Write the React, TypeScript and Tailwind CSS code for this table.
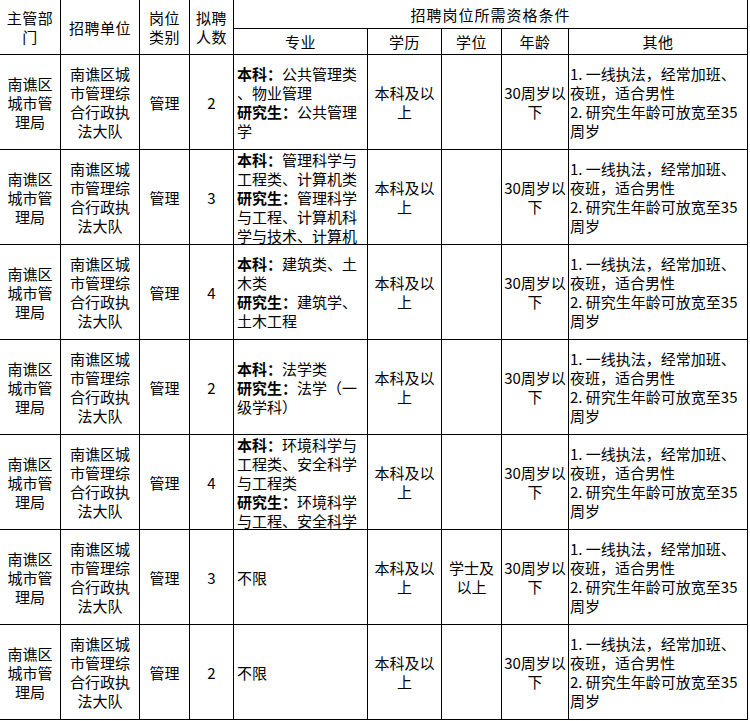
import React from "react";

type Seg = { b?: boolean; t: string };
type Line = string | Seg[];

function Lines({ lines, align = "center" }: { lines: Line[]; align?: "center" | "left" }) {
  return (
    <div className={align === "center" ? "text-center" : "text-left"}>
      {lines.map((l, i) => (
        <div key={i} className="whitespace-nowrap">
          {typeof l === "string"
            ? l
            : l.map((s, j) => (
                <span key={j} className={s.b ? "font-bold" : ""}>
                  {s.t}
                </span>
              ))}
        </div>
      ))}
    </div>
  );
}

const BK = "本科：";
const YJS = "研究生：";

type Row = {
  n: string;
  major: Line[];
  degree: Line[];
};

const other: Line[] = ["1. 一线执法，经常加班、", "夜班，适合男性", "2. 研究生年龄可放宽至35", "周岁"];

const rows: Row[] = [
  {
    n: "2",
    major: [
      [{ b: true, t: BK }, { t: "公共管理类" }],
      "、物业管理",
      [{ b: true, t: YJS }, { t: "公共管理" }],
      "学",
    ],
    degree: [],
  },
  {
    n: "3",
    major: [
      [{ b: true, t: BK }, { t: "管理科学与" }],
      "工程类、计算机类",
      [{ b: true, t: YJS }, { t: "管理科学" }],
      "与工程、计算机科",
      "学与技术、计算机",
    ],
    degree: [],
  },
  {
    n: "4",
    major: [
      [{ b: true, t: BK }, { t: "建筑类、土" }],
      "木类",
      [{ b: true, t: YJS }, { t: "建筑学、" }],
      "土木工程",
    ],
    degree: [],
  },
  {
    n: "2",
    major: [
      [{ b: true, t: BK }, { t: "法学类" }],
      [{ b: true, t: YJS }, { t: "法学（一" }],
      "级学科）",
    ],
    degree: [],
  },
  {
    n: "4",
    major: [
      [{ b: true, t: BK }, { t: "环境科学与" }],
      "工程类、安全科学",
      "与工程类",
      [{ b: true, t: YJS }, { t: "环境科学" }],
      "与工程、安全科学",
    ],
    degree: [],
  },
  { n: "3", major: ["不限"], degree: ["学士及", "以上"] },
  { n: "2", major: ["不限"], degree: [] },
];

const cell = "border-r border-b border-black flex items-center overflow-hidden";
const cc = `${cell} justify-center`;
const cl = `${cell} justify-start`;

export default function App() {
  return (
    <div
      className="bg-white w-[750px] h-[721px] text-black text-[15px] leading-[19px]"
      style={{ fontFamily: '"Noto Sans CJK SC", "Noto Sans", sans-serif' }}
    >
      <div className="grid grid-cols-[61px_79px_50px_44px_134px_74px_60px_67px_179px] grid-rows-[29px_26px_repeat(7,95px)] w-[748px]">
        <div className={`${cc} row-span-2 tracking-[0.5px]`}>
          <Lines lines={["主管部", "门"]} />
        </div>
        <div className={`${cc} row-span-2 tracking-[0.5px]`}>
          <Lines lines={["招聘单位"]} />
        </div>
        <div className={`${cc} row-span-2 tracking-[0.5px]`}>
          <Lines lines={["岗位", "类别"]} />
        </div>
        <div className={`${cc} row-span-2 tracking-[0.5px]`}>
          <Lines lines={["拟聘", "人数"]} />
        </div>
        <div className={`${cc} col-span-5 tracking-[1px]`}>
          <Lines lines={["招聘岗位所需资格条件"]} />
        </div>
        <div className={`${cc} tracking-[0.5px]`}>
          <Lines lines={["专业"]} />
        </div>
        <div className={`${cc} tracking-[0.5px]`}>
          <Lines lines={["学历"]} />
        </div>
        <div className={`${cc} tracking-[0.5px]`}>
          <Lines lines={["学位"]} />
        </div>
        <div className={`${cc} tracking-[0.5px]`}>
          <Lines lines={["年龄"]} />
        </div>
        <div className={`${cc} tracking-[0.5px]`}>
          <Lines lines={["其他"]} />
        </div>

        {rows.map((r, i) => (
          <React.Fragment key={i}>
            <div className={cc}>
              <Lines lines={["南谯区", "城市管", "理局"]} />
            </div>
            <div className={cc}>
              <Lines lines={["南谯区城", "市管理综", "合行政执", "法大队"]} />
            </div>
            <div className={cc}>
              <Lines lines={["管理"]} />
            </div>
            <div className={cc}>
              <Lines lines={[r.n]} />
            </div>
            <div className={`${cl} pl-[3px]`}>
              <Lines lines={r.major} align="left" />
            </div>
            <div className={cc}>
              <Lines lines={["本科及以", "上"]} />
            </div>
            <div className={cc}>
              <Lines lines={r.degree} />
            </div>
            <div className={cc}>
              <Lines lines={["30周岁以", "下"]} />
            </div>
            <div className={`${cl} pl-[1px]`}>
              <Lines lines={other} align="left" />
            </div>
          </React.Fragment>
        ))}
      </div>
    </div>
  );
}
